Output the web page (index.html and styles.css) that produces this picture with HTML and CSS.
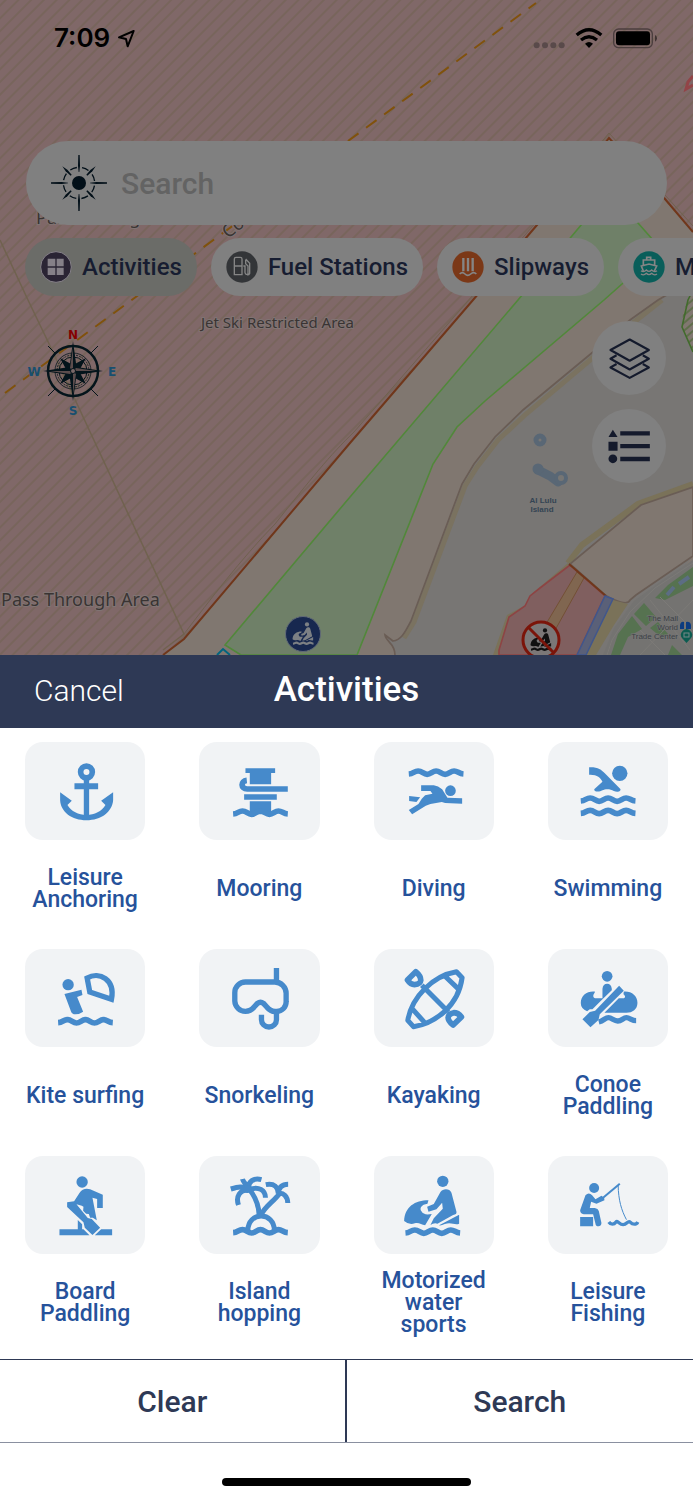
FILE: index.html
```html
<!DOCTYPE html>
<html lang="en">
<head>
<meta charset="utf-8">
<meta name="viewport" content="width=device-width, initial-scale=1">
<title>Activities</title>
<link rel="stylesheet" href="styles.css">
</head>
<body>
<svg class="defs" aria-hidden="true">
  <defs>
    <path id="wave" d="M0 4C14 3 16-5 28-5S44 5 55 5 71-5 82-5 98 5 109 5 125-5 136-5 150 3 164 4" fill="none" stroke="currentColor" stroke-width="17"/>
    <symbol id="jetski" viewBox="177 96 180 200">
      <g fill="currentColor">
        <circle cx="299" cy="123" r="17"/>
        <path d="M252 199L272 191 292 155C300 143 320 144 325 157L340 214C341 220 338 222 330 224L283 250Q272 247 262 254L272 234 299 205 297 187 280 207 256 214Z"/>
        <path d="M183 242C185 200 215 180 256 180L253 190C235 192 228 204 235 213 240 222 250 224 266 221L246 255C235 252 225 245 215 249Q198 255 183 242Z"/>
        <path d="M348 223V250C335 256 325 244 305 251Q295 256 288 255Z"/>
      </g>
      <use href="#wave" x="187" y="274"/>
    </symbol>
  </defs>
</svg>
<main class="app">
  <section class="hero">
    <svg class="map" viewBox="0 0 693 655" preserveAspectRatio="xMidYMin slice" aria-hidden="true">
      <defs>
        <pattern id="hatch" width="9" height="9" patternUnits="userSpaceOnUse" patternTransform="rotate(-45)"><path d="M0 4H9" stroke="#70614f" stroke-width="1"/></pattern>
        <pattern id="hatch2" width="6" height="6" patternUnits="userSpaceOnUse" patternTransform="rotate(-40)"><path d="M0 3H6" stroke="#3e6325" stroke-width="1"/></pattern>
      </defs>
      <rect width="693" height="655" fill="#807770"/>
      <path d="M0 0H693V232L609 137 537 225 473 300 350 443 184 639 163 655H0Z" fill="#806868"/>
      <path d="M0 0H693V232L609 137 537 225 473 300 350 443 184 639 163 655H0Z" fill="url(#hatch)"/>
      <path d="M0 240L28 300 52 350 184 634 163 650" fill="none" stroke="#70624f" stroke-width="1.5"/>
      <path d="M184 634C210 600 240 560 275 524 310 480 330 455 354 432L460 310 538 220 609 133 693 226" fill="none" stroke="#70624f"/>
      <path d="M163 655L184 639 350 443 473 300 537 225 609 138 665 199 693 232" fill="none" stroke="#70371b" stroke-width="2"/>
      <path d="M241 655L225 645 350 497 518 300 582 224 610 191 638 223 660 248 622 284 604 300 485 401 457 427 433 464 357 655Z" fill="#6f8068" stroke="#51883a" stroke-width="1.6"/>
      <path d="M217 655L223 649 230 655" fill="none" stroke="#00657f" stroke-width="2"/>
      <path d="M693 280L658 300 630 320 593 352 523 410 495 437 474 464 462 484 411 621C406 630 402 640 393 641L385 635 395 650V655H612L693 556V487L641 505 570 564 693 487Z" fill="#787674"/>
      <path d="M662 300L633 323 596 355 526 414 498 440 477 467 465 486 414 622 404 638" fill="none" stroke="#7a7260" stroke-width="5"/>
      <path d="M693 280L658 300 630 320 593 352 523 410 495 437 474 464 462 484 411 621C406 630 402 640 393 641L385 635C386 642 395 643 395 655" fill="none" stroke="#6a5d55" stroke-width="1.7"/>
      <path d="M693 484L638 504 582 545 568 563" fill="none" stroke="#7a7259" stroke-width="6"/>
      <path d="M693 487L641 505 570 564 605 595C615 601 628 606 630 600L636 595 693 556Z" fill="#807770" stroke="#6a5d55" stroke-width="1.7"/>
      <path d="M568 563L534 592 528 604 507 615 493 655H580Z" fill="#7a7259"/>
      <path d="M570 565L540 588 530 596 525 606 509 617 499 650V655H577L605 596Z" fill="#805f5f" stroke="#8d4444" stroke-width="1.6"/>
      <path d="M577 572L584 578 554 632 546 624Z" fill="#806650" stroke="#735035"/>
      <path d="M569 564L606 596" stroke="#70371b" stroke-width="2"/>
      <path d="M613 600L628 604 614 625 596 655H584Z" fill="#7a7259"/>
      <path d="M605 596L613 599 586 655H577Z" fill="#5a6078" stroke="#40568c" stroke-width="1.5"/>
      <path d="M693 560L660 582 634 601 614 628 603 655H693Z" fill="#747371"/>
      <path d="M693 567L668 585 655 598 665 600 693 586ZM644 603L634 614 646 626 656 617ZM632 616L618 634 611 655H620L628 637 642 629ZM672 645L682 655H668ZM658 622L668 634 662 638 650 628Z" fill="#567250"/>
      <path d="M693 563L655 588 630 612 612 640 607 655M650 600L690 650M693 600L640 655M660 597L693 630M640 630L665 655" fill="none" stroke="#7c7a77"/>
      <path d="M667 595L674 587M679 584L689 577" stroke="#5c6d84" stroke-width="4"/>
      <path d="M688 300L683 313 682 327 693 352V290Z" fill="#807770"/>
      <path d="M688 300L683 313 682 327 693 352V290Z" fill="url(#hatch2)"/>
      <path d="M693 290L688 300 682 327 693 352" fill="none" stroke="#416b2c" stroke-width="1.6"/>
      <path d="M693 76L688 82 686 89 693 85" fill="none" stroke="#924447" stroke-width="3"/>
      <path d="M5 393L536 3" stroke="#80520c" stroke-width="2" stroke-dasharray="13 9.4"/>
      <circle cx="540" cy="440" r="4" fill="none" stroke="#596775" stroke-width="5"/>
      <path d="M538 470L550 476 558 482" fill="none" stroke="#596775" stroke-width="9" stroke-linecap="round"/>
      <circle cx="538" cy="469" r="5.500" fill="#596775"/>
      <circle cx="561" cy="478" r="5" fill="#777674" stroke="#596775" stroke-width="4"/>
      <g font-family="Noto Sans, sans-serif" font-weight="400" fill="#3a3433" stroke="#807473" stroke-width="2" paint-order="stroke">
        <text x="36" y="224" font-size="18">Pass Through Area</text>
        <text x="201" y="328" font-size="15">Jet Ski Restricted Area</text>
        <text x="1" y="606" font-size="18">Pass Through Area</text>
        <text transform="translate(228 239) rotate(-38)" font-size="18">Co</text>
      </g>
      <g font-family="Liberation Sans, sans-serif" font-size="8" font-weight="700" fill="#344453" text-anchor="middle">
        <text x="543" y="503">Al Lulu</text><text x="542" y="512">Island</text>
      </g>
      <g font-family="Liberation Sans, sans-serif" font-size="8" font-weight="400" fill="#3c3f45" text-anchor="end" stroke="#777" stroke-width="1" paint-order="stroke">
        <text x="678" y="621">The Mall</text><text x="678" y="630">World</text><text x="678" y="639">Trade Center</text>
      </g>
      <path d="M680 629V625Q681 621 684 622V629ZM686 629V622Q690 621 691 625V629Z" fill="#0c3c80"/>
      <path d="M686.500 643L682 638A5.500 5.500 0 1 1 691 638Z" fill="#0b5c50"/>
      <rect x="684" y="633" width="5" height="4" fill="none" stroke="#788"/>
      <circle cx="303" cy="634" r="17.500" fill="#17284f" stroke="#626a78"/>
      <svg x="291" y="621" width="24" height="25" color="#7c8084"><use href="#jetski"/></svg>
      <circle cx="541" cy="640" r="18" fill="#7b7777" stroke="#7b150a" stroke-width="3"/>
      <svg x="529" y="627" width="24" height="25" color="#101010"><use href="#jetski"/></svg>
      <path d="M528 627L554 653" stroke="#7b150a" stroke-width="3"/>
    </svg>

    <div class="status">
      <div class="clock"><span>7:09</span>
        <svg width="19" height="19" viewBox="355 84 57 57" aria-hidden="true"><path d="M405 90L361 109 382 114 387 136Z" fill="none" stroke="#000" stroke-width="6" stroke-linejoin="round"/></svg>
      </div>
      <svg width="125" height="22" viewBox="570 80 375 66" aria-hidden="true">
        <g fill="#594a4a"><circle cx="581" cy="135" r="9"/><circle cx="606" cy="135" r="9"/><circle cx="631" cy="135" r="9"/><circle cx="656" cy="135" r="9"/></g>
        <g fill="none" stroke="#000" stroke-width="10"><path d="M701 104Q738 73 775 104"/><path d="M714 119Q738 100 762 119"/></g>
        <path d="M726 130Q738 120 750 130L738 143Z"/>
        <rect x="812" y="86" width="116" height="56" rx="15" fill="none" stroke="#4b3e3e" stroke-width="4"/>
        <rect x="819" y="93" width="102" height="42" rx="9"/>
        <path d="M936 104Q942 107 942 114T936 124Z" fill="#3f3333"/>
      </svg>
    </div>

    <label class="searchbar">
      <svg width="56" height="56" viewBox="153 464 168 168" aria-hidden="true">
        <circle cx="237" cy="548" r="21" fill="#020f18"/>
        <circle cx="237" cy="548" r="47" fill="none" stroke="#020f18" stroke-width="4" stroke-dasharray="21 15.9" stroke-dashoffset="-8"/>
        <g fill="#020f18">
          <path id="r1" d="M235 464H239L240 496 238 515H236L234 496Z"/>
          <use href="#r1" transform="rotate(90 237 548)"/><use href="#r1" transform="rotate(180 237 548)"/><use href="#r1" transform="rotate(270 237 548)"/>
          <path id="r2" d="M287 498L277 513 262 526 259 523 272 508Z"/>
          <use href="#r2" transform="rotate(90 237 548)"/><use href="#r2" transform="rotate(180 237 548)"/><use href="#r2" transform="rotate(270 237 548)"/>
        </g>
      </svg>
      <input type="search" placeholder="Search" aria-label="Search the map">
    </label>

    <div class="chips">
      <button class="chip chip-on" type="button">
        <svg viewBox="118 755 96 96" aria-hidden="true"><circle cx="166" cy="803" r="46" fill="#2a2434" stroke="#858088" stroke-width="3"/><path d="M141 778H164V801H141ZM168 778H189V801H168ZM141 805H164V827H141ZM168 805H189V827H168Z" fill="#858088"/></svg>
        Activities</button>
      <button class="chip" type="button">
        <svg viewBox="674 755 96 96" aria-hidden="true"><circle cx="722" cy="803" r="47" fill="#333538"/><g fill="none" stroke="#858585" stroke-width="4"><path d="M699 826V779Q699 774 704 774H717Q722 774 722 779V826Z"/><path d="M699 800H722M726 800H731V820Q733 828 740 824V800L733 793V782M733 779L745 792V822Q742 828 737 826"/></g></svg>
        Fuel Stations</button>
      <button class="chip" type="button">
        <svg viewBox="327 755 96 96" aria-hidden="true"><circle cx="375" cy="803" r="47" fill="#7b3817"/><path d="M361 776V816M375 776V816M389 776V816" stroke="#858585" stroke-width="7"/><path d="M350 824Q358 816 366 824T383 824 400 824" fill="none" stroke="#858585" stroke-width="5"/></svg>
        Slipways</button>
      <button class="chip" type="button">
        <svg viewBox="868 755 96 96" aria-hidden="true"><circle cx="916" cy="803" r="47" fill="#095e5a"/><g fill="none" stroke="#858585" stroke-width="5"><path d="M909 781V774H921V781M899 797V782H933V797M899 815L893 800 916 794 939 800 932 815"/><path d="M892 814Q900 820 908 812 916 820 924 812 932 820 940 814M892 824Q900 830 908 822 916 830 924 822 932 830 940 824" stroke-width="4"/></g></svg>
        Marinas</button>
    </div>

    <div class="tools">
      <svg class="compass" width="92" height="88" viewBox="26 328 92 88" role="img" aria-label="Compass">
        <g font-family="DejaVu Sans, sans-serif" font-size="12" font-weight="700" text-anchor="middle" fill="#174f70"><text x="73" y="339" fill="#850000">N</text><text x="34" y="376">W</text><text x="112" y="376">E</text><text x="73" y="415">S</text></g>
        <g fill="none" stroke="#04141b">
          <circle cx="73" cy="371" r="25" stroke-width="2.500"/><circle cx="73" cy="371" r="18" stroke-width=".8"/><circle cx="73" cy="371" r="14"/><circle cx="73" cy="371" r="16" stroke-width=".8" stroke-dasharray="2 1"/>
          <path d="M48 346L55 353M98 346L91 353M48 396L55 389M98 396L91 389"/>
        </g>
        <path d="M73 341L76.500 367 103 371 76.500 375 73 401 69.500 375 43 371 69.500 367Z" fill="#04141b"/>
        <path d="M60 358L73 365 86 358 79 371 86 384 73 377 60 384 67 371Z" fill="#04141b"/>
        <path d="M73 348V371L70 368ZM50 371H73L70 374ZM73 394V371L76 374ZM96 371H73L76 368Z" fill="#5b4c4c"/>
        <circle cx="73" cy="371" r="2.500" fill="#7a6868" stroke="#04141b"/>
      </svg>
      <div class="fabs">
        <button class="fab" type="button" aria-label="Layers"><svg viewBox="749 66 220 220" aria-hidden="true"><g fill="none" stroke="#141a2c" stroke-width="6.500" stroke-linejoin="round"><path d="M861 121L918 152 861 184 804 152Z"/><path d="M822 168L804 178 861 210 918 178 900 168"/><path d="M822 194L804 204 861 235 918 204 900 194"/></g></svg></button>
        <button class="fab" type="button" aria-label="Legend"><svg viewBox="749 326 220 220" aria-hidden="true"><path d="M811 388L825 409H798ZM798 423H825V450H798ZM833 392H921V405H833ZM833 430H921V443H833ZM833 468H921V481H833Z" fill="#141a2c"/><circle cx="811" cy="474" r="13" fill="#141a2c"/></svg></button>
      </div>
    </div>
  </section>

  <section class="sheet">
    <header class="sheet-head">
      <button class="cancel" type="button">Cancel</button>
      <h1>Activities</h1>
    </header>
    <div class="grid">
      <button class="item" type="button"><span class="tile"><svg viewBox="75 275 360 294" aria-hidden="true"><circle cx="259" cy="365" r="17.500" fill="none" stroke="currentColor" stroke-width="17"/><path d="M223 399H294V417H223ZM251 388H267V500H251Z"/><path d="M180 426L215 451 202 464C213 484 235 493 259 494 283 493 305 484 316 464L303 451 339 426V450C336 485 303 510 259 510S182 485 180 450Z"/></svg></span><span class="name">Leisure Anchoring</span></button>
      <button class="item" type="button"><span class="tile"><svg viewBox="597 275 360 294" aria-hidden="true"><path d="M736 354H825V368H813V402H749V368H736ZM732 432H830V448H732ZM749 453H813V492H749Z"/><path d="M740 390C721 392 721 416 741 416H863" fill="none" stroke="currentColor" stroke-width="17"/><use href="#wave" x="699" y="487"/></svg></span><span class="name">Mooring</span></button>
      <button class="item" type="button"><span class="tile"><svg viewBox="93 276 360 294" aria-hidden="true"><use href="#wave" x="197" y="368"/><circle cx="322" cy="422" r="16"/><path d="M234 406H272Q285 408 297 418L313 443 357 445V461L306 459 296 456 262 462 248 467 207 493 197 480 226 462 236 446 246 436 268 431 262 423H234ZM198 438L231 442 220 456 198 453Z"/></svg></span><span class="name">Diving</span></button>
      <button class="item" type="button"><span class="tile"><svg viewBox="615 276 360 294" aria-hidden="true"><circle cx="830" cy="370" r="23"/><path d="M738 352C765 351 774 359 785 370L831 416C836 422 825 429 812 423 802 416 786 416 778 421 765 429 750 423 754 417L778 395C772 382 762 373 738 374Z"/><use href="#wave" x="713" y="449"/><use href="#wave" x="713" y="486"/></svg></span><span class="name">Swimming</span></button>

      <button class="item" type="button"><span class="tile"><svg viewBox="75 56 360 294" aria-hidden="true"><circle cx="204" cy="163" r="17"/><path d="M193 191L244 178 247 194 231 200 249 244Q238 252 226 252 215 251 213 244Z"/><path d="M261 143C298 122 346 148 334 207L269 185Z" fill="none" stroke="currentColor" stroke-width="16"/><use href="#wave" x="174" y="273"/></svg></span><span class="name">Kite surfing</span></button>
      <button class="item" type="button"><span class="tile"><svg viewBox="597 56 360 294" aria-hidden="true"><g fill="none" stroke="currentColor" stroke-width="16"><path d="M736 155H824A34 34 0 0 1 858 189V214A28 28 0 0 1 830 243C818 245 808 240 800 230L790 219Q781 212 772 219L762 230C754 240 746 243 736 243A32 32 0 0 1 704 212V187A32 32 0 0 1 736 155Z"/><path d="M829 113V155M829 240V268A22.500 22 0 0 1 784 268V253"/></g></svg></span><span class="name">Snorkeling</span></button>
      <button class="item" type="button"><span class="tile"><svg viewBox="93 56 360 294" aria-hidden="true"><g fill="none" stroke="currentColor" stroke-width="15" stroke-linejoin="round"><path d="M340 124L357 142C352 180 335 215 305 243 275 270 245 284 211 289L194 270C200 235 215 205 245 175 275 145 305 130 340 124ZM305 137L344 174M207 235L244 276M236 165L316 245"/><path d="M218 124L193 149Q202 163 214 163 232 162 233 150 233 136 218 124ZM330 284L355 260Q345 247 332 247 316 250 315 262 315 272 330 284Z" stroke-width="17"/></g></svg></span><span class="name">Kayaking</span></button>
      <button class="item" type="button"><span class="tile"><svg viewBox="615 56 360 294" aria-hidden="true"><circle cx="792" cy="138" r="16"/><path d="M778 175Q780 160 792 160T806 175V180L778 207ZM713 218C713 195 733 181 756 184L751 193C749 200 752 204 760 204H781L748 237H740L732 243Q713 235 713 218ZM842 184C865 182 883 197 883 217S868 247 850 247H784L827 204H840C848 203 847 196 841 192ZM828 166L842 181 770 252 766 269 742 291 718 267 740 245 756 241Z"/><path d="M767 275C783 271 786 262 796 262S812 272 824 272 840 262 850 262 866 271 879 271" fill="none" stroke="currentColor" stroke-width="16"/></svg></span><span class="name">Conoe Paddling</span></button>

      <button class="item" type="button"><span class="tile"><svg viewBox="75 47 360 294" aria-hidden="true"><circle cx="246" cy="125" r="17"/><path d="M201 186L222 183 238 158Q250 141 270 147L308 163V203H291V176L277 172 290 240 278 232 270 232 266 221 258 220 249 211 250 199 245 196 229 192 263 233 275 236 300 262 277 284 254 262 250 246 201 200ZM233 239L246 252V267H250L268 285H178V267H233ZM303 267H336V285H284Z"/></svg></span><span class="name">Board Paddling</span></button>
      <button class="item" type="button"><span class="tile"><svg viewBox="597 47 360 294" aria-hidden="true"><use href="#wave" x="699" y="273"/><g fill="none" stroke="currentColor" stroke-width="15"><path d="M743 270C744 242 762 227 783 227S822 242 823 270"/><path d="M777 224C776 195 768 172 747 146M783 224C792 200 820 184 838 160"/><path d="M745 148C730 135 712 140 692 146M744 149C720 148 706 168 715 194M745 146C740 130 730 128 727 116M746 148C742 122 762 112 784 118M748 148C775 136 796 150 796 172M835 162C835 140 822 128 797 133M834 160C836 138 850 132 864 132M833 160C850 155 862 168 863 188"/></g><circle cx="742" cy="146" r="12"/></svg></span><span class="name">Island hopping</span></button>
      <button class="item" type="button"><span class="tile"><svg viewBox="93 47 360 294" aria-hidden="true"><use href="#jetski" x="177" y="96" width="180" height="200"/></svg></span><span class="name">Motorized water sports</span></button>
      <button class="item" type="button"><span class="tile"><svg viewBox="615 47 360 294" aria-hidden="true"><circle cx="753" cy="143" r="15"/><path d="M727 165Q737 154 747 165L757 177 775 166 783 172 784 180 760 190 744 184 740 203H755Q765 205 767 212L775 248Q774 258 766 258T757 250L750 222H722Q711 220 711 210ZM711 230H750V258H711Z"/><g fill="none" stroke="currentColor"><path d="M778 174L830 130" stroke-width="6"/><path d="M825 134C826 180 835 210 850 238" stroke-width="3"/><path d="M797 245C803 254 813 253 818 246 824 238 828 253 840 253 852 253 854 238 862 246 868 253 880 254 884 245" stroke-width="10"/></g></svg></span><span class="name">Leisure Fishing</span></button>
    </div>
    <div class="actions">
      <button type="button">Clear</button>
      <button type="button">Search</button>
    </div>
    <div class="home"></div>
  </section>
</main>
</body>
</html>
```
FILE: styles.css
```css
* { box-sizing: border-box; }
body {
  margin: 0;
  background: #fff;
  font-family: Roboto, "Liberation Sans", sans-serif;
  font-weight: 500;
}
button, input { font: inherit; color: inherit; border: 0; background: none; padding: 0; margin: 0; }
svg { display: block; flex: none; }
.defs { position: absolute; width: 0; height: 0; }

.hero { position: relative; overflow: hidden; padding: 22px 26px 172px; }
.map { position: absolute; inset: 0; width: 100%; height: 100%; }
.hero > div, .hero > label { position: relative; }

.status { display: flex; justify-content: space-between; align-items: center; height: 32px; padding: 0 9px 0 28px; }
.clock { display: flex; align-items: center; gap: 7px; font: 600 26px/32px Inter, sans-serif; color: #000; }

.searchbar { display: flex; align-items: center; gap: 14px; height: 84px; margin-top: 87px; padding: 0 25px; border-radius: 42px; background: #808080; }
.searchbar input { flex: 1; min-width: 0; height: 40px; outline: 0; font-size: 30px; appearance: none; }
.searchbar input::placeholder { color: #636363; opacity: 1; }

.chips { display: flex; gap: 14px; margin: 13px -26px 0 -1px; overflow: hidden; }
.chip { display: flex; flex: none; align-items: center; gap: 10px; height: 58px; padding: 0 15px; border-radius: 29px; background: #808080; color: #171d31; font-size: 24px; white-space: nowrap; }
.chip-on { background: #6b6c68; }
.chip svg { width: 32px; height: 32px; }

.tools { display: flex; justify-content: space-between; align-items: flex-start; margin-top: 25px; padding-right: 1px; }
.compass { margin-top: 7px; }
.fabs { display: grid; gap: 14px; }
.fab { width: 74px; height: 74px; border-radius: 50%; background: #808080; }

.sheet-head { display: grid; grid-template-columns: 1fr auto 1fr; align-items: center; height: 73px; padding: 0 34px 3px; background: #2e3955; color: #fff; }
.sheet-head h1 { margin: 0; font-size: 35px; font-weight: 500; line-height: 40px; }
.cancel { justify-self: start; font-size: 30px; font-weight: 300; }

.grid { display: grid; grid-template-columns: repeat(4, 1fr); gap: 11px 54px; padding: 14px 25px 7px; }
.item { display: grid; grid-template-rows: 98px 98px; min-width: 0; color: #26529b; }
.tile { border-radius: 18px; background: #f1f3f5; color: #468acb; }
.tile svg { width: 100%; height: 98px; fill: currentColor; }
.name { align-self: center; font-size: 23px; line-height: 22px; }

.actions { display: grid; grid-template-columns: 1fr 1fr; border-top: 1px solid #2e3955; border-bottom: 1px solid #8a90a0; }
.actions button { height: 82px; color: #2e3955; font-size: 30px; }
.actions button:first-child { border-right: 2px solid #2e3955; }
.home { width: 36%; height: 8px; margin: 35px auto 14px; border-radius: 4px; background: #000; }
```
